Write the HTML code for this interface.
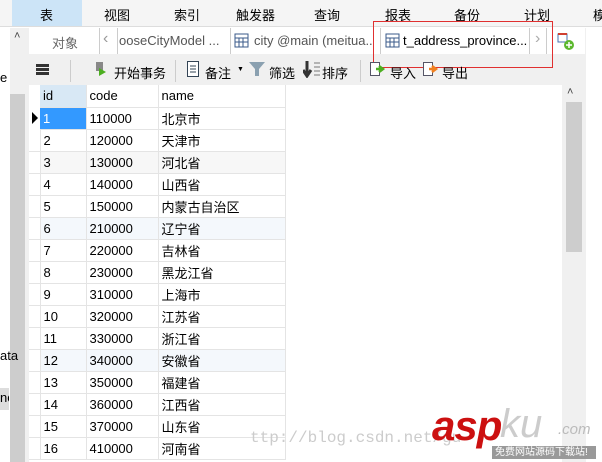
<!DOCTYPE html><html><head><meta charset="utf-8"><style>
*{margin:0;padding:0;box-sizing:border-box}
body{width:602px;height:462px;overflow:hidden;background:#fff;font-family:"Liberation Sans","Noto Sans CJK SC",sans-serif;font-size:13px;color:#000;position:relative}
.a{position:absolute;white-space:nowrap}
.menu span{position:absolute;top:5px;font-size:13px}
td{height:22px;border-right:1px solid #e4e4e4;border-bottom:1px solid #e4e4e4;padding-left:3px;font-size:13px;white-space:nowrap}
table{border-collapse:collapse;position:absolute;left:29px;top:85px}
</style></head><body>
<div class="a" style="left:0;top:0;width:602px;height:27px;background:#f5f5f5;border-bottom:1px solid #ddd"></div>
<div class="a" style="left:12px;top:0;width:70px;height:26px;background:#cce4f7"></div>
<div class="menu">
<span style="left:40px">表</span><span style="left:104px">视图</span><span style="left:174px">索引</span><span style="left:236px">触发器</span><span style="left:314px">查询</span><span style="left:385px">报表</span><span style="left:454px">备份</span><span style="left:524px">计划</span><span style="left:593px">模</span></div>
<div class="a" style="left:10px;top:28px;width:19px;height:434px;background:#f0f0f0"></div>
<div class="a" style="left:14px;top:30px;font-size:11px;color:#444">˄</div>
<div class="a" style="left:10px;top:94px;width:15px;height:368px;background:#cdcdcd"></div>
<div class="a" style="left:0;top:70px;font-size:13px">e</div>
<div class="a" style="left:0;top:348px;font-size:13px">ata</div>
<div class="a" style="left:0;top:388px;width:9px;height:22px;background:#ddd;overflow:hidden;font-size:13px;padding-top:2px">nc</div>
<div class="a" style="left:29px;top:28px;width:557px;height:57px;background:#f0f0f0"></div>
<div class="a" style="left:29px;top:28px;width:556px;height:26px;background:#fff"></div>
<div class="a" style="left:52px;top:33px;color:#666">对象</div>
<div class="a" style="left:99px;top:28px;width:1px;height:26px;background:#ccc"></div>
<div class="a" style="left:117px;top:28px;width:1px;height:26px;background:#ccc"></div>
<div class="a" style="left:103px;top:30px;color:#999;font-size:16px">‹</div>
<div class="a" style="left:119px;top:33px;color:#555">ooseCityModel ...</div>
<div class="a" style="left:230px;top:28px;width:1px;height:26px;background:#ccc"></div>
<svg class="a" style="left:234px;top:33px" width="15" height="15"><rect x="1" y="1" width="13" height="13" fill="#fff" stroke="#3a5a8a"/><path d="M1 5H14M1 9H14M5 5V14M9 5V14" stroke="#3a5a8a"/></svg>
<div class="a" style="left:254px;top:33px;color:#555;width:120px;overflow:hidden">city @main (meitua...</div>
<div class="a" style="left:380px;top:28px;width:1px;height:26px;background:#ccc"></div>
<svg class="a" style="left:385px;top:33px" width="15" height="15"><rect x="1" y="1" width="13" height="13" fill="#fff" stroke="#3a5a8a"/><path d="M1 5H14M1 9H14M5 5V14M9 5V14" stroke="#3a5a8a"/></svg>
<div class="a" style="left:403px;top:33px;width:125px;overflow:hidden">t_address_province...</div>
<div class="a" style="left:529px;top:28px;width:18px;height:26px;background:#fff;border-left:1px solid #ccc;border-right:1px solid #ccc;color:#aaa;font-size:16px;padding:2px 0 0 5px">›</div>
<svg class="a" style="left:557px;top:33px" width="18" height="18"><rect x="1" y="1" width="9" height="8" fill="#fff" stroke="#4a70b0"/><rect x="1" y="0" width="9" height="2" fill="#d04030"/><circle cx="12" cy="12" r="5" fill="#5cb82e"/><path d="M12 9V15M9 12H15" stroke="#fff" stroke-width="1.5"/></svg>
<div class="a" style="left:373px;top:21px;width:180px;height:47px;border:1px solid #e03030"></div>
<div class="a" style="left:36px;top:64px;width:13px;height:11px;border-top:3px solid #333;border-bottom:3px solid #333"><div style="margin-top:1px;height:3px;background:#333"></div></div>
<div class="a" style="left:70px;top:60px;width:1px;height:22px;background:#ccc"></div>
<svg class="a" style="left:94px;top:61px" width="14" height="16"><rect x="2" y="1" width="7" height="9" fill="#888"/><path d="M5 7L12 11L5 15Z" fill="#4caf20"/></svg>
<div class="a" style="left:114px;top:63px">开始事务</div>
<div class="a" style="left:175px;top:60px;width:1px;height:22px;background:#ccc"></div>
<svg class="a" style="left:187px;top:61px" width="12" height="16"><rect x="0.5" y="0.5" width="11" height="15" fill="#fff" stroke="#345"/><path d="M3 5H9M3 8H9M3 11H9" stroke="#345"/></svg>
<div class="a" style="left:205px;top:63px">备注</div>
<div class="a" style="left:237px;top:66px;font-size:7px">▼</div>
<svg class="a" style="left:249px;top:61px" width="16" height="16"><path d="M0 1H16L10 8V15H6V8Z" fill="#8aa0b0"/></svg>
<div class="a" style="left:269px;top:63px">筛选</div>
<svg class="a" style="left:303px;top:61px" width="18" height="17"><path d="M4 0V12M0 9L4 15L8 9" stroke="#333" stroke-width="3" fill="none"/><path d="M11 2H17M11 6H17M11 10H17M11 14H17" stroke="#777"/></svg>
<div class="a" style="left:322px;top:63px">排序</div>
<div class="a" style="left:360px;top:60px;width:1px;height:22px;background:#ccc"></div>
<svg class="a" style="left:370px;top:62px" width="16" height="16"><rect x="0.5" y="0.5" width="9" height="13" fill="#fff" stroke="#556"/><path d="M6 7H12M9 4L13 7L9 10" stroke="#4caf20" stroke-width="2.5" fill="none"/></svg>
<div class="a" style="left:390px;top:63px">导入</div>
<svg class="a" style="left:423px;top:62px" width="16" height="16"><rect x="0.5" y="0.5" width="9" height="13" fill="#fff" stroke="#556"/><path d="M6 7H12M9 4L13 7L9 10" stroke="#f08020" stroke-width="2.5" fill="none"/></svg>
<div class="a" style="left:442px;top:63px">导出</div>
<div class="a" style="left:562px;top:85px;width:24px;height:377px;background:#f0f0f0"></div>
<div class="a" style="left:567px;top:86px;font-size:11px;color:#444">˄</div>
<div class="a" style="left:566px;top:102px;width:16px;height:150px;background:#cdcdcd"></div>
<table>
<tr style="background:#fff"><td style="width:11px;border:none;background:#fff"></td><td style="width:46px;background:#d8e8f5">id</td><td style="width:72px">code</td><td style="width:127px">name</td></tr>
<tr><td style="border:none;padding:0"><div style="width:0;height:0;border-left:6px solid #000;border-top:6px solid transparent;border-bottom:6px solid transparent;margin-left:3px"></div></td><td style="background:#3399ff;color:#fff">1</td><td>110000</td><td>北京市</td></tr>
<tr><td></td><td>2</td><td>120000</td><td>天津市</td></tr>
<tr style="background:#f7f7f7"><td style="background:#fff"></td><td>3</td><td>130000</td><td>河北省</td></tr>
<tr><td></td><td>4</td><td>140000</td><td>山西省</td></tr>
<tr><td></td><td>5</td><td>150000</td><td>内蒙古自治区</td></tr>
<tr style="background:#f4f8fc"><td style="background:#fff"></td><td>6</td><td>210000</td><td>辽宁省</td></tr>
<tr><td></td><td>7</td><td>220000</td><td>吉林省</td></tr>
<tr><td></td><td>8</td><td>230000</td><td>黑龙江省</td></tr>
<tr><td></td><td>9</td><td>310000</td><td>上海市</td></tr>
<tr><td></td><td>10</td><td>320000</td><td>江苏省</td></tr>
<tr><td></td><td>11</td><td>330000</td><td>浙江省</td></tr>
<tr style="background:#f4f8fc"><td style="background:#fff"></td><td>12</td><td>340000</td><td>安徽省</td></tr>
<tr><td></td><td>13</td><td>350000</td><td>福建省</td></tr>
<tr><td></td><td>14</td><td>360000</td><td>江西省</td></tr>
<tr><td></td><td>15</td><td>370000</td><td>山东省</td></tr>
<tr><td></td><td>16</td><td>410000</td><td>河南省</td></tr>
</table>
<div class="a" style="left:250px;top:429px;font-family:'Liberation Mono',monospace;font-size:16px;color:#ccc">ttp://blog.csdn.net/gu</div>
<div class="a" style="left:432px;top:402px;font-size:42px;font-weight:bold;font-style:italic;color:#cc1010;letter-spacing:-1px">asp</div>
<div class="a" style="left:500px;top:402px;font-size:40px;font-style:italic;color:#ccc">ku</div>
<div class="a" style="left:558px;top:421px;font-size:15px;font-style:italic;color:#bbb">.com</div>
<div class="a" style="left:492px;top:446px;width:104px;height:13px;background:#999;color:#fff;font-size:10px;line-height:13px;padding-left:3px">免费网站源码下载站!</div>
</body></html>
